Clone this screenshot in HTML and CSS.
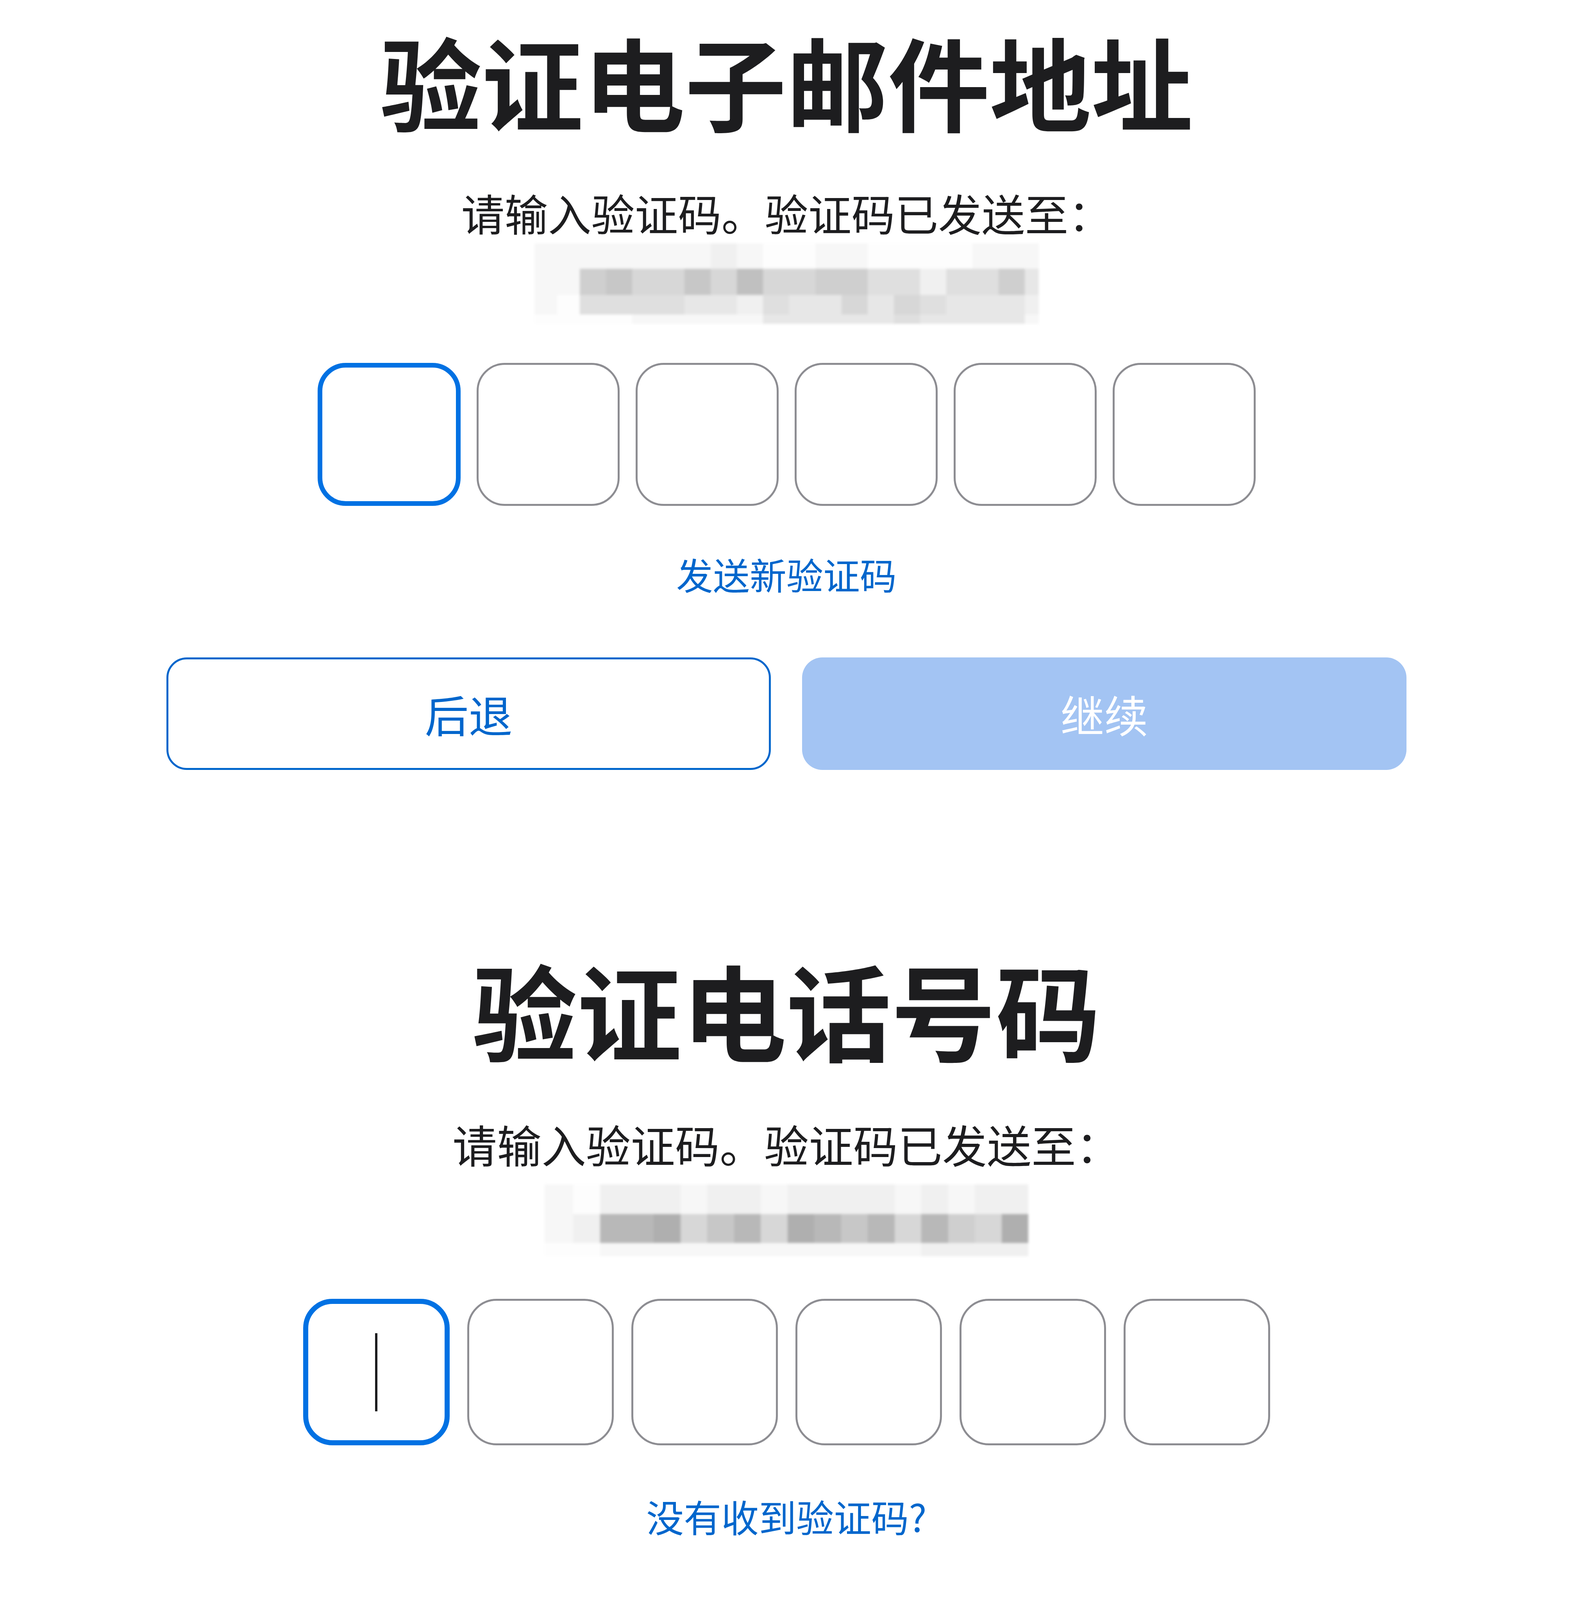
FILE: index.html
```html
<!DOCTYPE html>
<html lang="zh-CN">
<head>
<meta charset="utf-8">
<title>验证</title>
<link rel="stylesheet" href="styles.css">
</head>
<body>
<main class="page">
  <section class="verify verify--email">
    <h1 class="title">验证电子邮件地址</h1>
    <p class="subtitle">请输入验证码。验证码已发送至：</p>
    <div class="masked masked--email" aria-label="已隐藏的电子邮件地址">
      <i class="p1"></i><i class="p1"></i><i class="p1"></i><i class="p1"></i><i class="p1"></i><i class="p1"></i><i class="p1"></i><i class="p2"></i><i class="p1"></i><i class="p0"></i><i class="p0"></i><i class="p1"></i><i class="p1"></i><i class="p0"></i><i class="p0"></i><i class="p0"></i><i class="p0"></i><i class="p1"></i><i class="p1"></i><i class="p1"></i>
      <i class="p1"></i><i class="p1"></i><i class="p6"></i><i class="p7"></i><i class="p5"></i><i class="p5"></i><i class="p7"></i><i class="p5"></i><i class="p8"></i><i class="p5"></i><i class="p5"></i><i class="p6"></i><i class="p6"></i><i class="p4"></i><i class="p4"></i><i class="p2"></i><i class="p4"></i><i class="p4"></i><i class="p6"></i><i class="p3"></i>
      <i class="p1"></i><i class="p0"></i><i class="p4"></i><i class="p4"></i><i class="p4"></i><i class="p4"></i><i class="p3"></i><i class="p3"></i><i class="p2"></i><i class="p4"></i><i class="p3"></i><i class="p3"></i><i class="p5"></i><i class="p3"></i><i class="p5"></i><i class="p4"></i><i class="p3"></i><i class="p3"></i><i class="p3"></i><i class="p2"></i>
      <i class="p0"></i><i class="p0"></i><i class="p0"></i><i class="p0"></i><i class="p1"></i><i class="p1"></i><i class="p1"></i><i class="p1"></i><i class="p1"></i><i class="p3"></i><i class="p3"></i><i class="p3"></i><i class="p3"></i><i class="p3"></i><i class="p4"></i><i class="p3"></i><i class="p3"></i><i class="p3"></i><i class="p3"></i><i class="p1"></i>
    </div>
    <div class="code">
      <div class="digit digit--active"></div>
      <div class="digit"></div>
      <div class="digit"></div>
      <div class="digit"></div>
      <div class="digit"></div>
      <div class="digit"></div>
    </div>
    <a class="link" href="#">发送新验证码</a>
    <div class="actions">
      <button class="btn btn--back" type="button">后退</button>
      <button class="btn btn--continue" type="button" disabled>继续</button>
    </div>
  </section>

  <section class="verify verify--phone">
    <h1 class="title">验证电话号码</h1>
    <p class="subtitle">请输入验证码。验证码已发送至：</p>
    <div class="masked masked--phone" aria-label="已隐藏的电话号码">
      <i class="p1"></i><i class="p0"></i><i class="p2"></i><i class="p2"></i><i class="p2"></i><i class="p1"></i><i class="p2"></i><i class="p2"></i><i class="p1"></i><i class="p2"></i><i class="p2"></i><i class="p2"></i><i class="p2"></i><i class="p1"></i><i class="p2"></i><i class="p1"></i><i class="p2"></i><i class="p2"></i>
      <i class="p1"></i><i class="p2"></i><i class="p9"></i><i class="p9"></i><i class="p10"></i><i class="p5"></i><i class="p7"></i><i class="p9"></i><i class="p5"></i><i class="p10"></i><i class="p9"></i><i class="p7"></i><i class="p9"></i><i class="p5"></i><i class="p9"></i><i class="p6"></i><i class="p5"></i><i class="p10"></i>
      <i class="p0"></i><i class="p0"></i><i class="p1"></i><i class="p1"></i><i class="p1"></i><i class="p1"></i><i class="p1"></i><i class="p1"></i><i class="p1"></i><i class="p1"></i><i class="p1"></i><i class="p1"></i><i class="p1"></i><i class="p1"></i><i class="p2"></i><i class="p2"></i><i class="p2"></i><i class="p2"></i>
    </div>
    <div class="code">
      <div class="digit digit--active"><span class="caret"></span></div>
      <div class="digit"></div>
      <div class="digit"></div>
      <div class="digit"></div>
      <div class="digit"></div>
      <div class="digit"></div>
    </div>
    <a class="link" href="#">没有收到验证码?</a>
    <div class="actions">
      <button class="btn btn--back" type="button">后退</button>
      <button class="btn btn--continue" type="button" disabled>继续</button>
    </div>
  </section>

  <div class="bottom-rule"></div>
</main>
</body>
</html>
```
FILE: styles.css
```css
* {
  box-sizing: border-box;
}

html,
body {
  margin: 0;
  padding: 0;
  background: #ffffff;
}

body {
  font-family: "Noto Sans CJK SC", "Noto Sans", sans-serif;
  color: #1d1d1f;
}

.page {
  width: 4016px;
  height: 4590px;
  padding-left: 10px;
  display: flex;
  flex-direction: column;
  overflow: hidden;
}

.verify {
  display: flex;
  flex-direction: column;
  align-items: center;
}

.title {
  margin: 0;
  font-weight: 700;
  line-height: 300px;
  white-space: nowrap;
  color: #1d1d1f;
}

.subtitle {
  margin: 0;
  font-weight: 400;
  line-height: 140px;
  white-space: nowrap;
  color: #1d1d1f;
}

.masked {
  display: grid;
  filter: blur(3px);
}

.masked i {
  display: block;
}

.p0 { background: #fdfdfd; }
.p1 { background: #f7f7f7; }
.p2 { background: #f0f0f0; }
.p3 { background: #e7e7e7; }
.p4 { background: #dfdfdf; }
.p5 { background: #d7d7d7; }
.p6 { background: #cfcfcf; }
.p7 { background: #c7c7c7; }
.p8 { background: #c0c0c0; }
.p9 { background: #b8b8b8; }
.p10 { background: #afafaf; }

.code {
  display: flex;
}

.digit {
  flex: none;
  border-style: solid;
  border-color: #8d8d92;
  background: #ffffff;
  display: flex;
  align-items: center;
  justify-content: center;
}

.digit--active {
  border-color: #0071e3;
}

.caret {
  display: block;
  width: 6px;
  height: 200px;
  background: #1d1d1f;
}

.link {
  color: #0066cc;
  text-decoration: none;
  line-height: 120px;
  white-space: nowrap;
}

.actions {
  display: flex;
}

.btn {
  flex: none;
  font-family: inherit;
  font-weight: 400;
  line-height: 1;
  margin: 0;
  padding: 0;
  display: flex;
  align-items: center;
  justify-content: center;
  cursor: pointer;
}

.btn--back {
  background: #ffffff;
  border: 5px solid #0066cc;
  color: #0066cc;
}

.btn--continue {
  background: #a3c4f3;
  border: 0;
  color: #ffffff;
}

.bottom-rule {
  margin-top: auto;
  height: 3px;
  background: #1d1d1f;
  margin-left: -10px;
}

/* ---------- email section ---------- */
.verify--email {
  padding-top: 55px;
}

.verify--email .title {
  font-size: 260px;
}

.verify--email .subtitle {
  margin-top: 119px;
  font-size: 111px;
}

.masked--email {
  margin-top: 9px;
  grid-template-columns: 58px 58px repeat(17, 67px) 36px;
  grid-template-rows: 65px 67px 50px 24px;
}

.verify--email .code {
  margin-top: 100px;
  gap: 41px;
}

.verify--email .digit {
  width: 366px;
  height: 366px;
  border-width: 5px;
  border-radius: 72px;
}

.verify--email .digit--active {
  border-width: 12px;
}

.verify--email .link {
  margin-top: 114px;
  font-size: 94px;
}

.verify--email .actions {
  margin-top: 154px;
  gap: 80px;
}

.verify--email .btn {
  width: 1547px;
  height: 288px;
  border-radius: 52px;
  font-size: 112px;
}

/* ---------- phone section ---------- */
.verify--phone {
  margin-top: 460px;
}

.verify--phone .title {
  font-size: 268px;
}

.verify--phone .subtitle {
  margin-top: 127px;
  font-size: 114px;
}

.masked--phone {
  margin-top: 34px;
  grid-template-columns: 73px 69px repeat(16, 68.5px);
  grid-template-rows: 76px 74px 34px;
}

.verify--phone .code {
  margin-top: 109px;
  gap: 45px;
}

.verify--phone .digit {
  width: 375px;
  height: 375px;
  border-width: 5px;
  border-radius: 75px;
}

.verify--phone .digit--active {
  border-width: 13px;
}

.verify--phone .link {
  margin-top: 121px;
  font-size: 96px;
}

.verify--phone .actions {
  margin-top: 162px;
  gap: 85px;
}

.verify--phone .btn {
  width: 1595px;
  height: 297px;
  border-radius: 55px;
  font-size: 115px;
}
```
